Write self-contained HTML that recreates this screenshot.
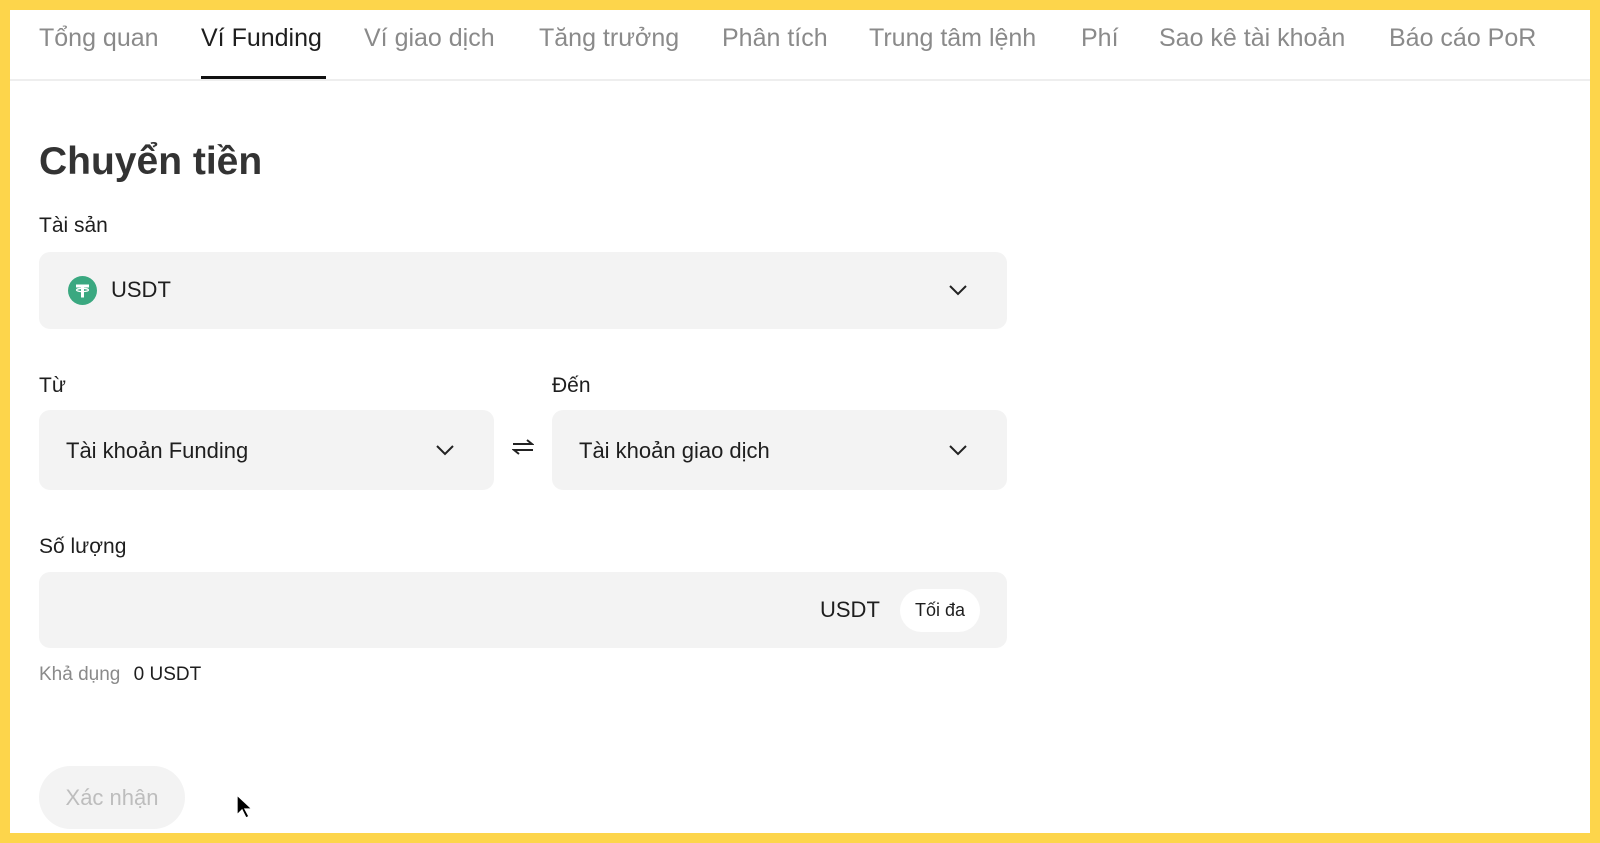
<!DOCTYPE html>
<html><head><meta charset="utf-8"><style>
*{margin:0;padding:0;box-sizing:border-box}
html,body{width:1600px;height:843px;overflow:hidden;background:#FDD54B;font-family:"Liberation Sans",Arial,sans-serif}
.page{position:absolute;left:10px;top:10px;width:1580px;height:823px;background:#fff;overflow:hidden}
.abs{position:absolute}
.tab{position:absolute;top:13px;font-size:25px;color:#8a8a8a;white-space:nowrap;line-height:30px}
.box{position:absolute;background:#f3f3f3;border-radius:11px}
.lbl{position:absolute;font-size:21px;color:#1e1e1e;line-height:24px}
.txt{position:absolute;font-size:22px;color:#1e1e1e;line-height:24px}
</style></head><body><div class="page">
<div class="tab" style="left:29px">Tổng quan</div>
<div class="tab" style="left:191px;color:#1e1e1e">Ví Funding</div>
<div class="tab" style="left:354px">Ví giao dịch</div>
<div class="tab" style="left:529px">Tăng trưởng</div>
<div class="tab" style="left:712px">Phân tích</div>
<div class="tab" style="left:859px">Trung tâm lệnh</div>
<div class="tab" style="left:1071px">Phí</div>
<div class="tab" style="left:1149px">Sao kê tài khoản</div>
<div class="tab" style="left:1379px">Báo cáo PoR</div>
<div class="abs" style="left:0;top:69px;width:1580px;height:2px;background:#eeeeee"></div>
<div class="abs" style="left:191px;top:66px;width:125px;height:3px;background:#111"></div>

<div class="abs" style="left:29px;top:130px;font-size:39px;font-weight:bold;color:#333;line-height:44px">Chuyển tiền</div>
<div class="lbl" style="left:29px;top:204px">Tài sản</div>
<div class="box" style="left:29px;top:242px;width:968px;height:77px"></div>
<svg class="abs" style="left:58px;top:266px" width="29" height="29" viewBox="0 0 29 29"><circle cx="14.5" cy="14.5" r="14.5" fill="#3aa880"/><path d="M8 8.5h13v3h-5v10h-3v-10H8z" fill="#fff"/><ellipse cx="14.5" cy="14" rx="6" ry="1.6" fill="none" stroke="#fff" stroke-width="1.2"/></svg>
<div class="txt" style="left:101px;top:268px">USDT</div>
<svg class="abs" style="left:938px;top:273px" width="20" height="14" viewBox="0 0 20 14"><path d="M2 3l8 8 8-8" fill="none" stroke="#222" stroke-width="2"/></svg>

<div class="lbl" style="left:29px;top:364px">Từ</div>
<div class="lbl" style="left:542px;top:364px">Đến</div>
<div class="box" style="left:29px;top:400px;width:455px;height:80px"></div>
<div class="box" style="left:542px;top:400px;width:455px;height:80px"></div>
<div class="txt" style="left:56px;top:429px">Tài khoản Funding</div>
<div class="txt" style="left:569px;top:429px">Tài khoản giao dịch</div>
<svg class="abs" style="left:425px;top:433px" width="20" height="14" viewBox="0 0 20 14"><path d="M2 3l8 8 8-8" fill="none" stroke="#222" stroke-width="2"/></svg>
<svg class="abs" style="left:938px;top:433px" width="20" height="14" viewBox="0 0 20 14"><path d="M2 3l8 8 8-8" fill="none" stroke="#222" stroke-width="2"/></svg>
<svg class="abs" style="left:502px;top:428px" width="22" height="18" viewBox="0 0 22 18"><path d="M1 6h19l-5-4M21 12H2l5 4" fill="none" stroke="#222" stroke-width="2"/></svg>

<div class="lbl" style="left:29px;top:525px">Số lượng</div>
<div class="box" style="left:29px;top:562px;width:968px;height:76px"></div>
<div class="txt" style="left:810px;top:588px">USDT</div>
<div class="abs" style="left:890px;top:579px;width:80px;height:43px;border-radius:22px;background:#fff;font-size:18px;color:#1e1e1e;text-align:center;line-height:43px">Tối đa</div>
<div class="abs" style="left:29px;top:654px;font-size:19px;color:#8a8a8a;line-height:22px">Khả dụng <span style="color:#1e1e1e;margin-left:8px">0 USDT</span></div>

<div class="abs" style="left:29px;top:756px;width:146px;height:63px;border-radius:32px;background:#f3f3f3;color:#bdbdbd;font-size:22px;text-align:center;line-height:63px">Xác nhận</div>
<svg class="abs" style="left:226px;top:784px" width="18" height="26" viewBox="0 0 18 26"><path d="M1 1v20l5-5 4 8 3-1.5-4-7.5h7z" fill="#000" stroke="#fff" stroke-width="1.3"/></svg>
</div></body></html>
